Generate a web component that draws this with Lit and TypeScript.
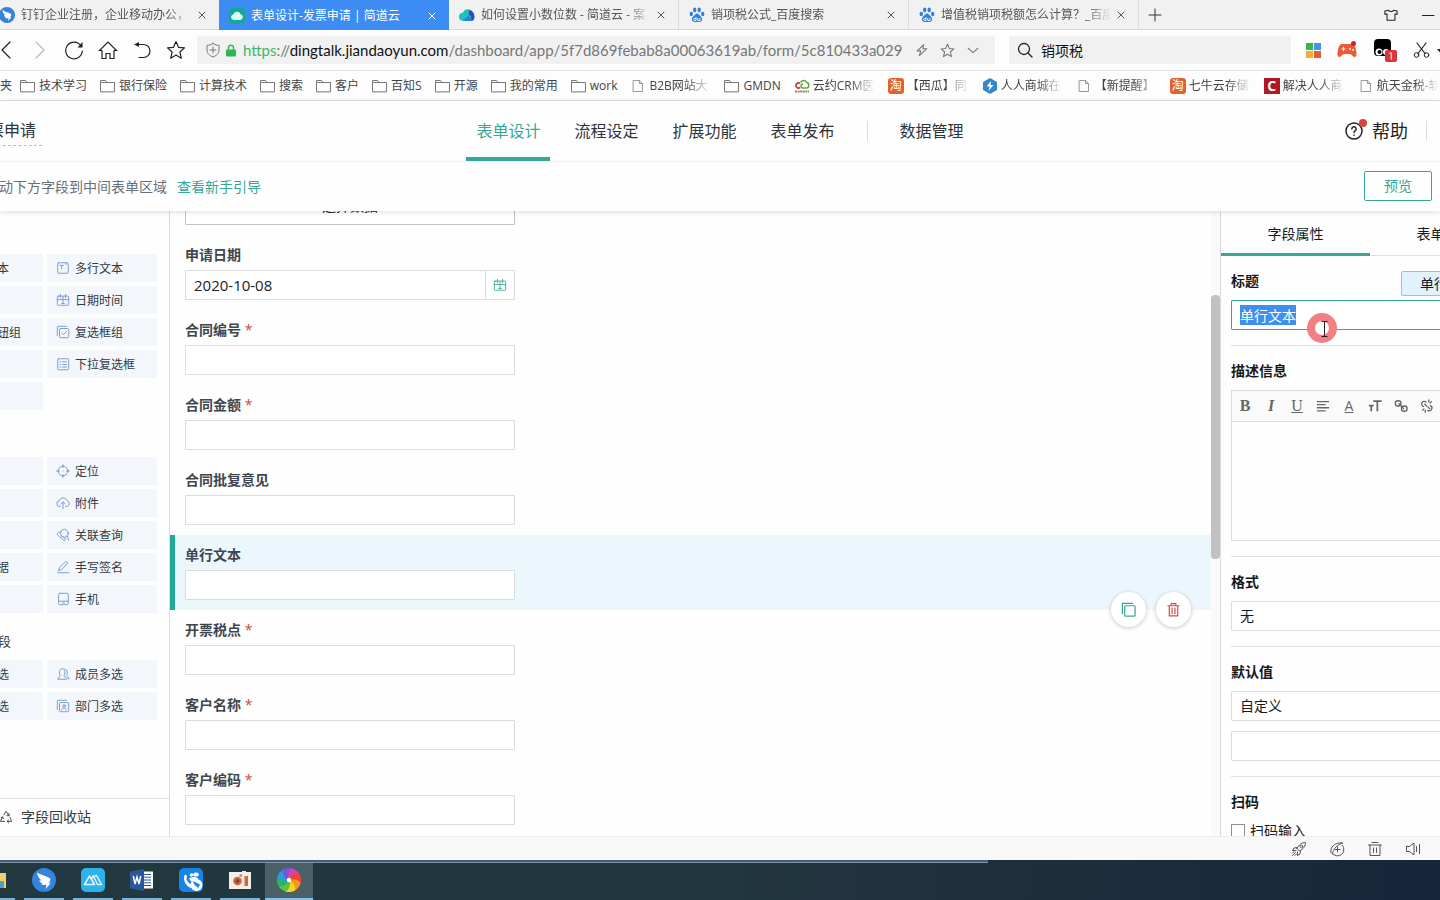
import { LitElement, html, svg, css, nothing } from "lit";
import { customElement, query } from "lit/decorators.js";
import { classMap } from "lit/directives/class-map.js";

const stroke = (body: unknown, size = 16, box = 16) => html`<svg
  width=${size} height=${size} viewBox="0 0 ${box} ${box}" fill="none" stroke="currentColor"
  stroke-width="1" stroke-linecap="round" stroke-linejoin="round" aria-hidden="true">${body}</svg>`;

const star = svg`<path d="M10 1.5l2.5 5.8 6 .6-4.6 4.1 1.4 6.2L10 15l-5.3 3.2L6.100 12 1.5 7.900l6-.6z"/>`;

const icons = {
  back: () => stroke(svg`<path stroke-width="1.2" d="M14 2L6 10l8 8"/>`, 20, 20),
  forward: () => stroke(svg`<path stroke="#bbb" stroke-width="1.2" d="M6 2l8 8-8 8"/>`, 20, 20),
  reload: () => stroke(svg`<path stroke-width="1.2" d="M17 6A8.300 8.300 0 1 0 18.300 11"/><path d="M18.500 2v5.500h-5z" fill="currentColor" stroke="none"/>`, 20, 20),
  home: () => stroke(svg`<path stroke-width="1.2" stroke-linejoin="miter" d="M1.500 10.500L10 2l8.500 8.500H16V18.500h-4v-5H8v5H4v-8z"/>`, 20, 20),
  undo: () => stroke(svg`<path stroke-width="1.2" d="M5 4.500h6.500a6.500 6.500 0 0 1 0 13H7"/><path d="M2 4.500l5-2.500v5z" fill="currentColor" stroke="none"/>`, 20, 20),
  star: () => stroke(svg`<g stroke-width="1.200">${star}</g>`, 20, 20),
  starSmall: () => stroke(svg`<g stroke-width="1.400">${star}</g>`, 15, 20),
  shield: () => stroke(svg`<path d="M8 1.500C6 3 4 3.300 2 3.300V8c0 3.500 2.500 5.500 6 7 3.500-1.500 6-3.500 6-7V3.300c-2 0-4-.3-6-1.800zM8 5v6M5 8h6"/>`, 16, 16),
  lock: () => html`<svg width="10" height="13" viewBox="0 0 10 13" aria-hidden="true"><path d="M2.500 6V3.800a2.500 2.500 0 0 1 5 0V6" fill="none" stroke="#3bb75c" stroke-width="1.500"/><rect x="0" y="5.500" width="10" height="7" rx="1" fill="#2fb457"/></svg>`,
  bolt: () => stroke(svg`<path stroke-width="1.200" d="M10 2L2.500 9h4l-1.500 5.500L13.500 6.500H9z"/>`, 14, 16),
  down: () => stroke(svg`<path stroke-width="1.200" d="M2.500 6L8 11l5.500-5"/>`, 14, 16),
  search: () => stroke(svg`<circle cx="7" cy="7" r="5.500" stroke-width="1.300"/><path stroke-width="1.300" d="M11 11l4 4"/>`, 16, 16),
  close: () => stroke(svg`<path d="M1 1l6 6M7 1L1 7"/>`, 8, 8),
  plus: () => stroke(svg`<path d="M7 1v12M1 7h12"/>`, 14, 14),
  shirt: () => stroke(svg`<path stroke-width="1.200" d="M5 2.500c1 2 5 2 6 0l4 1v3.500h-2.500V14h-9V7H1V3.500z"/>`, 14, 16),
  minimise: () => stroke(svg`<path d="M0 7.500h12"/>`, 14, 14),
  tiles: () => html`<svg width="15" height="15" viewBox="0 0 15 15" aria-hidden="true"><path fill="#3cb44a" d="M0 0h7v7H0z"/><path fill="#3f9ae3" d="M8 0h7v7H8z"/><path fill="#f2ae3a" d="M0 8h7v7H0z"/><path fill="#e8583a" d="M8 8h7v7H8z"/></svg>`,
  pad: () => html`<svg width="20" height="18" viewBox="0 0 20 18" aria-hidden="true"><path fill="#ec5a36" d="M5 3h10c2.500 0 3.500 3 4.300 7.500.7 4-.3 5.500-1.800 5.500-1.700 0-2.800-3-4.500-3H7c-1.700 0-2.800 3-4.500 3C1 16 0 14.500.7 10.500 1.500 6 2.500 3 5 3z"/><path d="M6.500 6v4M4.500 8h4" stroke="#fff"/><circle cx="13" cy="8" r="1" fill="#fff"/><circle cx="16" cy="9" r="1" fill="#fff"/><circle cx="16.500" cy="2.500" r="2.500" fill="#c5252f"/></svg>`,
  monkey: () => html`<svg width="24" height="24" viewBox="0 0 24 24" aria-hidden="true"><rect x="1" y="1" width="17" height="17" rx="4"/><circle cx="6" cy="14" r="3.500" fill="#fff"/><circle cx="6.500" cy="14" r="2"/><circle cx="13" cy="14" r="3" fill="#fff"/><rect x="12" y="12" width="12" height="12" rx="2" fill="#d8353c"/><path d="M16.500 15.500l1.700-.8v7" stroke="#fff" fill="none"/></svg>`,
  scissors: () => html`<svg width="27" height="16" viewBox="0 0 27 16" fill="none" stroke="currentColor" stroke-linecap="round" aria-hidden="true"><path stroke-width="1.200" d="M4 1l8 10.500M13 1L5 11.500"/><circle cx="3.500" cy="13" r="2.300"/><circle cx="13.500" cy="13" r="2.300"/><path fill="currentColor" stroke="none" d="M24 7h6l-3 3.500z"/></svg>`,
  folder: () => stroke(svg`<path stroke="#777" d="M.5 13.500v-11h5l1.500 2h7.500v9zM.5 4.500H7"/>`),
  page: () => stroke(svg`<path stroke="#999" d="M3.500 2.500h6l3 3v8h-9zM9.500 2.500v3h3"/>`),
  crm: () => html`<svg width="16" height="16" viewBox="0 0 16 16" aria-hidden="true"><path d="M6 5.500a2.500 2.500 0 1 0 0 4" fill="none" stroke="#c8352e" stroke-width="1.600"/><path d="M6.500 4.500a3.300 3.300 0 0 1 6-.2c3.200.7 2.700 5.700 0 5.700H9a2 2 0 0 1 0-4" fill="none" stroke="#5aa83c" stroke-width="1.500"/><path d="M1 13.500h14" stroke="#8a8a78" stroke-width="2" stroke-dasharray="2 .6"/></svg>`,
  hex: () => html`<svg width="16" height="16" viewBox="0 0 16 16" aria-hidden="true"><path fill="#3686c8" d="M8 0l7 4v8l-7 4-7-4V4z"/><path fill="#fff" d="M9 3L4.500 8.500h3L6.500 13l5-6h-3z"/></svg>`,
  dingtalk: (size = 16) => html`<svg width=${size} height=${size} viewBox="0 0 24 24" aria-hidden="true"><circle cx="12" cy="12" r="12" fill="#3284dc"/><path fill="#fff" d="M5 4.500c3.500 2.200 8.500 3.500 12.500 5.500 1.500 1 1 2.200.3 3.500l-1 1.800h2L13.500 21l1-4h-2c-1 .2-2.500 0-3.500-1.200l2-.3c-2-.5-3.500-1.800-3.700-3.300l2.500.3C7.500 11 5.500 8.500 5 4.500z"/></svg>`,
  cloudGreen: () => html`<svg width="16" height="16" viewBox="0 0 16 16" aria-hidden="true"><rect width="16" height="16" rx="4" fill="#15a896"/><path fill="#d9fff5" d="M4.500 12a2.800 2.800 0 0 1-.3-5.500 4 4 0 0 1 7.500-.3A3 3 0 0 1 11.500 12z"/></svg>`,
  cloudBlue: () => html`<svg width="16" height="14" viewBox="0 0 17 14" aria-hidden="true"><path fill="#20c0c0" d="M4.500 13a4 4 0 0 1-.5-8.500A5 5 0 0 1 12 2l-2 11z"/><path fill="#2b50b8" d="M11 1.500c5 1 7.500 8.500 3.500 11.500H8L13 9c-2-1-3.500-3-2-7.500z"/><path fill="#1688dd" d="M4 13l6.500-6 4 6z"/></svg>`,
  paw: () => html`<svg width="16" height="16" viewBox="0 0 16 16" aria-hidden="true"><g fill="#2f7fdf"><ellipse cx="2.300" cy="7" rx="1.700" ry="2.200"/><ellipse cx="5.700" cy="3" rx="1.700" ry="2.400"/><ellipse cx="10.200" cy="3" rx="1.700" ry="2.400"/><ellipse cx="13.700" cy="7" rx="1.700" ry="2.200"/><path d="M8 6.500c1.500 0 2 1.500 3.500 2.800 2.500 2 2 5.700-1 5.700H5.500c-3 0-3.500-3.700-1-5.700C6 8 6.500 6.500 8 6.500z"/></g><path d="M7 10v3.500H5.500a1 1 0 0 1 0-2H7M8.800 11v2.500H11V11" fill="none" stroke="#fff" stroke-width=".9"/></svg>`,
  help: () => stroke(svg`<circle cx="9" cy="9" r="8" stroke-width="1.500"/><path stroke-width="1.500" d="M6.800 7a2.200 2.200 0 1 1 3.200 2c-.8.400-1 .8-1 1.500M9 13v.2"/>`, 18, 18),
  textarea: () => stroke(svg`<rect x="2" y="2" width="12" height="12" rx="1"/><path d="M4.500 5h4M6.500 5v4M11.500 2v2"/>`, 14),
  calendar: () => stroke(svg`<rect x="1.500" y="3.500" width="13" height="10.500" rx="1"/><path d="M1.500 7.500h13M5 1.500v4M11 1.500v4M8 4v8M6.500 12h3"/>`, 14),
  checks: () => stroke(svg`<path d="M1.500 12V2.500a1 1 0 0 1 1-1H12"/><rect x="4" y="4" width="10.500" height="10.500" rx="1"/><path d="M6.500 9l2 2 4-4"/>`, 14),
  list: () => stroke(svg`<rect x="2" y="2" width="12.500" height="12.500" rx="1"/><path d="M4.500 5.500h1M7.500 5.500H12M4.500 8.500h1M7.500 8.500H12M4.500 11.500h1M7.500 11.500H12"/>`, 14),
  target: () => stroke(svg`<circle cx="8" cy="8" r="5.500"/><path d="M8 .8v3M8 12.200v3M.8 8h3M12.200 8h3M8 8v.1" stroke-width="1.200"/>`, 14),
  upload: () => stroke(svg`<path d="M5 12H4a3.300 3.300 0 0 1-.5-6.500 4.700 4.700 0 0 1 9-.2A3.400 3.400 0 0 1 12 12h-1M8 14.500V7M5.500 9.200L8 6.800l2.500 2.400"/>`, 14),
  relate: () => stroke(svg`<circle cx="9.500" cy="6" r="4.500"/><path d="M5 4.500C2 4 .5 7 2.500 8.500l6 5.500c1.500 1 3-.5 2-2L7.500 10M13 9.500l1.500 4.500"/>`, 14),
  pen: () => stroke(svg`<path d="M3 12l1-3.500L11.500 1.500l2 2L6.500 11 3 12zM2 14.500h12.500"/>`, 14),
  phone: () => stroke(svg`<rect x="3" y="1.500" width="11" height="13" rx="1.500"/><path d="M3 10.500h11M7.500 12.500h2"/>`, 14),
  people: () => stroke(svg`<path d="M2 13.500c0-2 3-2 3-3.500C3.500 8.500 3 2 7 2s3.500 6.500 2 8c0 1.500 3 1.500 3 3.500zM10 2.500c4 0 3 6 2 7.500.5 1.500 3 1.500 3 3.500h-1.500"/>`, 14),
  dept: () => stroke(svg`<path d="M1.500 12V2.500a1 1 0 0 1 1-1H12"/><rect x="4" y="4" width="10.500" height="10.500" rx="1"/><circle cx="9.200" cy="8" r="1.500"/><path d="M6.500 12.500c.3-3 5-3 5.500 0"/>`, 14),
  recycle: () => stroke(svg`<path d="M5.500 5.500L8 1.500l3 4.500M11.500 4v2.500H9M12.500 8.500l2 4.500H9.500M11 11.500L9.300 13 11 14.700M6.500 13h-5l2.500-5M2.300 8.800L4 7.800l1.200 2"/>`, 14),
  copy: () => stroke(svg`<path stroke-width="1.300" d="M1.500 12.500V1.500h11"/><rect x="4" y="4" width="11" height="11" rx="1" stroke-width="1.300"/>`, 15),
  trash: () => stroke(svg`<path stroke-width="1.300" d="M2 4h12M5.500 4V1.800h5V4M3.500 4v10.700h9V4M6.500 6.500v6M9.500 6.500v6"/>`, 15),
  alignLeft: () => stroke(svg`<path stroke-width="1.500" stroke-linecap="butt" d="M1 3h14M1 6.500h10M1 10h14M1 13.500h10"/>`, 14),
  link: () => stroke(svg`<rect x="1.500" y="2" width="6.500" height="6" rx="3" stroke-width="1.500"/><rect x="8.500" y="8" width="6.500" height="6" rx="3" stroke-width="1.500"/><path stroke-width="1.500" d="M5.500 5.500l5.500 5.500"/>`, 14),
  unlink: () => stroke(svg`<path stroke-width="1.500" d="M7 3.500a3 3 0 1 0-3 5M9 13a3 3 0 1 0 3-5.500M5.500 6l2 2M9 9l2 2M10 1v2M13 3l-1.500 1.500M3 13l1.500-1.500M6 15v-2"/>`, 14),
  textSize: () => stroke(svg`<path stroke-width="2" stroke-linecap="butt" d="M6 2.500h9.500M10.700 2.500V14M1 7.500h5.500M3.700 7.500V14"/>`, 14),
  rocket: () => stroke(svg`<path d="M6 7.500C8 3.500 11 1.500 14.500 1.500c0 3.500-2 6.500-6 8.500L6 7.500zM6.500 6.500L3 7l-1.500 2.500H5M9.500 9.500L9 13l-2.500 1.500V11M4.500 11.500l-3 3M3 10.500L1.500 12M5.500 13L4 14.500"/><circle cx="10.500" cy="5.500" r="1.300"/>`),
  boost: () => stroke(svg`<path d="M13.500 4.500a6 6 0 1 1-10 8M2 12C.5 6 6 1 14 2 8 3.500 4 8 3.500 13M8.500 6v5M6 8.500h5"/>`),
  bin: () => stroke(svg`<path d="M1.500 4h13M5 1.500h6M3 4v10.500h10V4M6.500 7v4.500M9.500 7v4.500"/>`),
  sound: () => stroke(svg`<path d="M1.500 5.500v5h3L9 14V2L4.500 5.500zM11.500 5.500v5M14.500 3.500v9"/>`),
  explorer: () => html`<svg width="24" height="24" viewBox="0 0 24 24" aria-hidden="true"><path fill="#f3cf6b" d="M0 3h9l2 2h12v15H0z"/><path fill="#4aa0c8" d="M5 13h16v7h-4v-3H9v3H5z"/></svg>`,
  mind: () => html`<svg width="24" height="24" viewBox="0 0 24 24" aria-hidden="true"><rect width="24" height="24" rx="5" fill="#2cb3ec"/><path d="M3.500 16.500L8.500 8l5 8.500zM10.500 11L12 8l2 .500M14 8l1.500-.5L20.500 16.500h-4L12.500 8.500" fill="none" stroke="#dff6ff" stroke-width="1.500" stroke-linejoin="round"/></svg>`,
  word: () => html`<svg width="24" height="24" viewBox="0 0 24 24" aria-hidden="true"><path fill="#fff" d="M12 3.500h11v17H12z"/><path d="M14 6.500h7M14 9.200h7M14 12h7M14 14.800h7M14 17.500h7" stroke="#2b579a"/><path fill="#2b579a" d="M0 3.500L14 1v22L0 20.500z"/><path d="M3.300 8l1.700 8 2-7 2 7 1.700-8" fill="none" stroke="#fff" stroke-width="1.500"/></svg>`,
  call: () => html`<svg width="24" height="24" viewBox="0 0 24 24" aria-hidden="true"><rect width="24" height="24" rx="5" fill="#1585e8"/><path fill="#fff" d="M6 6.500l2 1.200-.5 3.300c.8 2.500 2.500 4.500 5 5.500l1.500-1 2.500 2-2.500 3C9 20 4.500 15 5 9z"/><circle cx="17.500" cy="17" r="6" fill="#fff"/><circle cx="12.500" cy="7" r="1.800" fill="#fff"/><ellipse cx="17" cy="6.500" rx="2.800" ry="2" fill="#fff"/><path fill="#fff" d="M10 10.500c3-2 7-2 9 0v3h-7z"/><path fill="#1585e8" d="M14 13l7 3.500-1 2-1.500 2.500v-2c-2-.5-4-3-4.500-6z"/></svg>`,
  recorder: () => html`<svg width="22" height="20" viewBox="0 0 22 20" aria-hidden="true"><path fill="#f4eee9" d="M0 2h13V1h4v1h5v17H0z"/><circle cx="8.500" cy="11" r="4.300" fill="#cf6842"/><circle cx="8.500" cy="11" r="2" fill="#8a4128"/><path fill="#cf6842" d="M15.500 6H19v10h-3.500zM10.500 4.500h2.500v2h-2.500z"/></svg>`,
  wheel: () => html`<svg width="24" height="24" viewBox="0 0 24 24" aria-hidden="true">${["#f0442e", "#f7941e", "#f5d327", "#62c33a", "#24b46a", "#2a9be0", "#7a55d9", "#e0429a"].map((c, i) => svg`<path fill=${c} transform="rotate(${i * 45 + 60} 12 12)" d="M12 12C9 8 9 3 12 0a12 12 0 0 1 9.500 4.500C17 4 13 7 12 12z"/>`)}<circle cx="12" cy="12" r="2.200" fill="#fff"/></svg>`,
};

type IconName = keyof typeof icons;
const icon = (name: IconName) => (icons[name] as () => unknown)();

const base = css`
  :host { font-family: "Open Sans", "Noto Sans CJK SC", sans-serif; }
  * { box-sizing: border-box; }
  svg { display: block; flex: none; }
  button, input, select, textarea { font: inherit; color: inherit; margin: 0; }
  button { background: none; border: 0; padding: 0; }
  a { color: inherit; text-decoration: none; }
`;

const tabs: { icon: IconName; title: string; active?: boolean }[] = [
  { icon: "dingtalk", title: "钉钉企业注册，企业移动办公，" },
  { icon: "cloudGreen", title: "表单设计-发票申请 | 简道云", active: true },
  { icon: "cloudBlue", title: "如何设置小数位数 - 简道云 - 案" },
  { icon: "paw", title: "销项税公式_百度搜索" },
  { icon: "paw", title: "增值税销项税额怎么计算？_百度" },
];

const bookmarks: { icon: IconName | "tao" | "c"; title: string; clip?: boolean }[] = [
  ...["技术学习", "银行保险", "计算技术", "搜索", "客户", "百知S", "开源", "我的常用", "work"].map((title) => ({ icon: "folder" as const, title })),
  { icon: "page", title: "B2B网站大", clip: true },
  { icon: "folder", title: "GMDN" },
  { icon: "crm", title: "云约CRM医", clip: true },
  { icon: "tao", title: "【西瓜】同", clip: true },
  { icon: "hex", title: "人人商城在", clip: true },
  { icon: "page", title: "【新提醒】", clip: true },
  { icon: "tao", title: "七牛云存储", clip: true },
  { icon: "c", title: "解决人人商", clip: true },
  { icon: "page", title: "航天金税-软", clip: true },
];

@customElement("browser-chrome")
class BrowserChrome extends LitElement {
  static styles = [base, css`
    :host { display: block; flex: none; overflow: hidden; color: #333; background: #fdfdfd; }
    .tabs { display: flex; height: 30px; background: #f1f1f2; border-bottom: 1px solid #d9d9db; font-size: 12px; }
    .tab { display: flex; align-items: center; gap: 6px; width: 230px; flex: none; padding: 1px 13px 0 10px; border-right: 1px solid #dcdcde; color: #555; }
    .tab:first-child { margin-left: -11px; border-right: 0; }
    .tab.active { background: #3c8cf4; color: #fff; border-right: 0; height: 30px; }
    .title { flex: 1; overflow: hidden; white-space: nowrap; line-height: 20px; mask-image: linear-gradient(90deg, #000 85%, transparent); }
    .active .title { mask-image: none; }
    .new { padding: 0 9px; }
    .window { margin-left: auto; display: flex; align-items: center; gap: 24px; color: #222; }
    .window button:last-child { width: 18px; overflow: hidden; }
    .tools { display: flex; align-items: center; height: 40px; color: #222; }
    .nav { display: flex; gap: 14px; margin: 0 11px 0 -4px; }
    .address { display: flex; align-items: center; gap: 5px; flex: 1; min-width: 0; height: 28px; padding: 0 15px 0 8px; background: #f1f1f2; color: #777; }
    .url { flex: 1; overflow: hidden; white-space: nowrap; font-family: Lato, "Noto Sans CJK SC", sans-serif; font-size: 15px; line-height: 24px; margin-left: 2px; color: #777; }
    .scheme { color: #3db868; }
    .domain { color: #111; }
    .address button + button { margin-left: 6px; }
    .search { display: flex; align-items: center; gap: 8px; width: 282px; height: 28px; padding: 0 8px; margin: 0 15px 0 14px; background: #f1f1f2; }
    .search input { border: 0; outline: 0; padding: 0; background: none; font-size: 14px; min-width: 0; color: #111; }
    .addons { display: flex; align-items: center; gap: 16px; }
    .bookmarks { display: flex; align-items: center; gap: 12px; height: 31px; border-top: 1px solid #e2e2e4; border-bottom: 1px solid #e2e2e4; font-size: 12px; line-height: 20px; color: #444; white-space: nowrap; }
    .cut { margin-right: -4px; }
    .bookmark { display: flex; align-items: center; gap: 3px; flex: none; }
    .bookmark + .bookmark { margin-left: 1px; }
    .clip { width: 62px; overflow: hidden; mask-image: linear-gradient(90deg, #000 60%, transparent); }
    .badge { display: grid; place-items: center; width: 16px; height: 16px; border-radius: 3px; background: #e0622f; color: #fff; font-size: 12px; line-height: 16px; }
    .badge.c { background: #b01923; border-radius: 0; font-weight: 700; font-size: 14px; }
  `];

  render() {
    return html`
      <nav class="tabs" aria-label="标签页">
        ${tabs.map((t) => html`<div class=${classMap({ tab: true, active: !!t.active })}>
          ${icon(t.icon)}<span class="title">${t.title}</span><button aria-label="关闭">${icon("close")}</button>
        </div>`)}
        <button class="new" aria-label="新标签页">${icon("plus")}</button>
        <div class="window"><button aria-label="皮肤">${icon("shirt")}</button><button aria-label="最小化">${icon("minimise")}</button></div>
      </nav>
      <div class="tools">
        <div class="nav">
          ${([["back", "后退"], ["forward", "前进"], ["reload", "刷新"], ["home", "主页"], ["undo", "恢复"], ["star", "收藏"]] as [IconName, string][]).map(([n, l]) => html`<button aria-label=${l}>${icon(n)}</button>`)}
        </div>
        <div class="address">
          ${icon("shield")}${icon("lock")}
          <span class="url"><span class="scheme">https</span>://<span class="domain">dingtalk.jiandaoyun.com</span>/dashboard/app/5f7d869febab8a00063619ab/form/5c810433a029</span>
          <button aria-label="极速">${icon("bolt")}</button><button aria-label="收藏">${icon("starSmall")}</button><button aria-label="更多">${icon("down")}</button>
        </div>
        <label class="search">${icon("search")}<input aria-label="搜索" .value=${"销项税"} /></label>
        <div class="addons">
          ${([["tiles", "应用"], ["pad", "游戏"], ["monkey", "脚本"], ["scissors", "截图"]] as [IconName, string][]).map(([n, l]) => html`<button aria-label=${l}>${icon(n)}</button>`)}
        </div>
      </div>
      <nav class="bookmarks" aria-label="收藏夹">
        <span class="cut">夹</span>
        ${bookmarks.map((b) => html`<a class="bookmark" href="#">
          ${b.icon === "tao" ? html`<span class="badge">淘</span>` : b.icon === "c" ? html`<span class="badge c">C</span>` : icon(b.icon)}
          <span class=${b.clip ? "clip" : ""}>${b.title}</span></a>`)}
      </nav>`;
  }
}

@customElement("app-header")
class AppHeader extends LitElement {
  static styles = [base, css`
    :host { display: block; flex: none; position: relative; z-index: 2; background: #fefefe; box-shadow: 0 1px 5px rgba(60, 60, 90, .18); color: #2e343b; }
    .top { display: grid; grid-template-columns: 1fr auto 1fr; height: 61px; border-bottom: 1px solid #f1f1f3; font-size: 16px; }
    .name { justify-self: start; align-self: center; margin-left: -28px; padding: 0 6px 2px 0; line-height: 26px; border-bottom: 1px dashed #bbb; white-space: nowrap; }
    .nav { display: flex; align-items: stretch; gap: 14px; }
    .nav a { padding: 17px 10px 0; line-height: 26px; border-bottom: 4px solid transparent; }
    .nav a.active { color: #35a797; border-color: #35a797; }
    .rule { align-self: center; width: 1px; height: 20px; background: #ddd; }
    .nav .rule { margin: 0 8px; }
    .help { justify-self: end; display: flex; align-items: center; font-size: 18px; line-height: 26px; color: #222; }
    .help a { display: flex; align-items: center; gap: 9px; margin-right: 18px; }
    .mark { position: relative; }
    .dot { position: absolute; top: -3px; right: -4px; width: 8px; height: 8px; border-radius: 50%; background: #d5453f; }
    .help .rule { margin-right: 13px; }
    .sub { display: flex; align-items: center; height: 49px; padding-right: 8px; font-size: 14px; line-height: 20px; }
    .hint { margin: 0 10px 0 -57px; color: #66707b; white-space: nowrap; }
    .guide { color: #35a797; }
    .preview { margin: 0 0 1px auto; width: 68px; height: 30px; border: 1px solid #35a797; border-radius: 2px; color: #35a797; line-height: 26px; }
  `];

  render() {
    return html`
      <div class="top">
        <span class="name">发票申请</span>
        <nav class="nav">
          <a class="active" href="#">表单设计</a><a href="#">流程设定</a><a href="#">扩展功能</a><a href="#">表单发布</a>
          <span class="rule"></span><a href="#">数据管理</a>
        </nav>
        <div class="help"><a href="#"><span class="mark">${icon("help")}<span class="dot"></span></span>帮助</a><span class="rule"></span></div>
      </div>
      <div class="sub">
        <span class="hint">点击或拖动下方字段到中间表单区域</span><a class="guide" href="#">查看新手引导</a>
        <button class="preview">预览</button>
      </div>`;
  }
}

const palette: { title: string; items: [string, string, IconName?][] }[] = [
  { title: "基础字段", items: [["单行文本", "多行文本", "textarea"], ["数字", "日期时间", "calendar"], ["单选按钮组", "复选框组", "checks"], ["下拉框", "下拉复选框", "list"], ["分割线", ""]] },
  { title: "增强字段", items: [["地址", "定位", "target"], ["图片", "附件", "upload"], ["子表单", "关联查询", "relate"], ["关联数据", "手写签名", "pen"], ["流水号", "手机", "phone"]] },
  { title: "部门成员字段", items: [["成员单选", "成员多选", "people"], ["部门单选", "部门多选", "dept"]] },
];

@customElement("field-palette")
class FieldPalette extends LitElement {
  static styles = [base, css`
    :host { display: flex; flex-direction: column; flex: none; width: 170px; border-right: 1px solid #d8dadd; background: #fefefe; color: #333a42; overflow: hidden; }
    .list { flex: 1; min-height: 0; display: flex; flex-direction: column; align-items: flex-end; gap: 4px; padding-right: 12px; overflow: hidden; }
    h3 { margin: 14px 0 9px; font-size: 13px; font-weight: 400; line-height: 20px; }
    .grid { display: grid; grid-template-columns: 110px 110px; gap: 4px; }
    .item { display: flex; align-items: center; gap: 5px; height: 28px; padding: 2px 0 0 9px; background: #f3f6fb; font-size: 12px; line-height: 20px; white-space: nowrap; }
    .item svg { color: #6f95c8; margin-bottom: 2px; }
    .recycle { display: flex; align-items: center; gap: 8px; height: 38px; padding-bottom: 1px; border-top: 1px solid #dcdee0; margin-left: -1px; font-size: 14px; line-height: 20px; }
  `];

  render() {
    const item = (label: string, name: IconName = "textarea") => (label ? html`<button class="item">${icon(name)}${label}</button>` : nothing);
    return html`
      <div class="list">
        ${palette.map((s) => html`<section><h3>${s.title}</h3><div class="grid">
          ${s.items.map(([a, b, n]) => html`${item(a)}${item(b, n)}`)}
        </div></section>`)}
      </div>
      <button class="recycle">${icon("recycle")}字段回收站</button>`;
  }
}

const fields: { label: string; kind?: "pick" | "date"; value?: string; required?: boolean; selected?: boolean }[] = [
  { label: "选择数据", kind: "pick" },
  { label: "申请日期", kind: "date", value: "2020-10-08" },
  { label: "合同编号", required: true },
  { label: "合同金额", required: true },
  { label: "合同批复意见" },
  { label: "单行文本", selected: true },
  { label: "开票税点", required: true },
  { label: "客户名称", required: true },
  { label: "客户编码", required: true },
];

@customElement("form-canvas")
class FormCanvas extends LitElement {
  static styles = [base, css`
    :host { display: flex; flex: 1; min-width: 0; overflow: hidden; background: #fefefe; color: #40464e; }
    .fields { flex: 1; min-width: 0; margin-top: -26px; }
    .field { position: relative; display: flex; flex-direction: column; padding: 10px; border-left: 5px solid transparent; }
    .field.selected { background: #ebf7fc; border-color: #20a898; }
    label { font-size: 14px; font-weight: 600; line-height: 20px; margin-bottom: 5px; }
    .required { color: #d0453e; font-weight: 400; }
    .control { display: flex; width: 330px; max-width: 100%; height: 30px; border: 1px solid #d9dbde; border-radius: 1px; background: #fff; color: #222; }
    .control input { flex: 1; min-width: 0; border: 0; outline: 0; padding: 0 8px; background: none; font-size: 15px; }
    .pick { align-items: flex-start; justify-content: center; border-color: #bfc2c6; font-size: 14px; line-height: 20px; }
    .date { display: grid; place-items: center; width: 29px; border-left: 1px solid #d9dbde; color: #35a797; }
    .actions { position: absolute; right: 20px; bottom: -17px; z-index: 1; display: flex; gap: 10px; }
    .round { display: grid; place-items: center; width: 35px; height: 35px; border-radius: 50%; background: #fff; box-shadow: 0 1px 4px rgba(0, 0, 0, .22); color: #35a797; }
    .delete { color: #d0504a; }
    .track { flex: none; width: 9px; background: #fafafb; }
    .thumb { height: 264px; margin-top: 84px; border-radius: 4px; background: #c1c1c3; }
  `];

  render() {
    return html`
      <div class="fields">
        ${fields.map((f, i) => html`<div class=${classMap({ field: true, selected: !!f.selected })}>
          ${f.kind === "pick"
            ? html`<button class="control pick">${f.label}</button>`
            : html`<label for="f${i}">${f.label} ${f.required ? html`<span class="required">*</span>` : nothing}</label>
              <div class="control"><input id="f${i}" .value=${f.value ?? ""} />
                ${f.kind === "date" ? html`<button class="date" aria-label="选择日期">${icon("calendar")}</button>` : nothing}</div>`}
          ${f.selected ? html`<div class="actions"><button class="round" aria-label="复制">${icon("copy")}</button><button class="round delete" aria-label="删除">${icon("trash")}</button></div>` : nothing}
        </div>`)}
      </div>
      <div class="track"><div class="thumb"></div></div>`;
  }
}

@customElement("property-panel")
class PropertyPanel extends LitElement {
  static styles = [base, css`
    :host { display: block; flex: none; width: 220px; border-left: 1px solid #d8dadd; background: #fefefe; color: #16191c; overflow: clip; font-size: 14px; line-height: 20px; position: relative; }
    .inner { width: 298px; }
    .tabs { display: grid; grid-template-columns: 1fr 1fr; height: 45px; }
    .tabs button { padding-top: 2px; border-bottom: 1px solid #dcdee0; }
    .tabs .active { border-bottom: 3px solid #35a797; padding-top: 4px; }
    section { margin-left: 10px; padding: 15px 10px 15px 0; border-top: 1px solid #dcdee0; position: relative; }
    section:first-of-type { border-top: 0; }
    .label { display: block; font-weight: 600; margin-bottom: 9px; }
    .type { position: absolute; right: 10px; top: 15px; width: 108px; height: 25px; padding-left: 18px; text-align: left; background: #e2f2fd; border: 1px solid #9cc0d4; border-radius: 2px; }
    .box { display: block; width: 100%; height: 30px; padding: 0 8px; border: 1px solid #d9dbde; border-radius: 1px; background: #fff; outline: 0; appearance: none; }
    .box + .box { margin-top: 10px; }
    .box.focus { border-color: #35a797; }
    .box::selection { background: #3d8ff0; color: #fff; }
    .editor { border: 1px solid #d9dbde; }
    .format { display: flex; align-items: center; height: 31px; background: #fafafb; border-bottom: 1px solid #dcdee0; color: #666; }
    .format button { display: grid; place-items: center; width: 26px; height: 30px; }
    .serif { font-family: "Liberation Serif", serif; font-size: 16px; }
    .bold { font-weight: 700; }
    .italic { font-style: italic; font-weight: 700; }
    .under { text-decoration: underline; }
    .editor textarea { display: block; width: 100%; height: 118px; border: 0; outline: 0; resize: none; background: none; }
    .check { display: flex; align-items: center; gap: 5px; }
    .check input { appearance: none; width: 14px; height: 14px; border: 1px solid #8c8f93; background: #fff; }
    .pointer { position: absolute; left: 86px; top: 102px; }
  `];

  @query("#title") titleBox!: HTMLInputElement;

  firstUpdated() {
    this.titleBox.focus({ preventScroll: true });
    this.titleBox.select();
  }

  render() {
    return html`<div class="inner">
      <div class="tabs"><button class="active">字段属性</button><button>表单属性</button></div>
      <section>
        <label class="label" for="title">标题</label><button class="type">单行文本</button>
        <input class="box focus" id="title" .value=${"单行文本"} />
      </section>
      <section>
        <label class="label" for="desc">描述信息</label>
        <div class="editor">
          <div class="format">
            <button class="serif bold" aria-label="加粗">B</button>
            <button class="serif italic" aria-label="斜体">I</button>
            <button class="serif under" aria-label="下划线">U</button>
            <button aria-label="对齐">${icon("alignLeft")}</button>
            <button class="under" aria-label="颜色">A</button>
            <button aria-label="字号">${icon("textSize")}</button>
            <button aria-label="链接">${icon("link")}</button>
            <button aria-label="取消链接">${icon("unlink")}</button>
          </div>
          <textarea id="desc"></textarea>
        </div>
      </section>
      <section><label class="label" for="format">格式</label><select class="box" id="format"><option>无</option></select></section>
      <section>
        <label class="label" for="default">默认值</label>
        <select class="box" id="default"><option>自定义</option></select><input class="box" aria-label="默认值内容" />
      </section>
      <section><span class="label">扫码</span><label class="check"><input type="checkbox" />扫码输入</label></section>
    </div>
    <svg class="pointer" width="30" height="30" viewBox="0 0 30 30" aria-hidden="true">
      <circle cx="15" cy="15" r="11" fill="#fff" stroke="#f27f83" stroke-width="8"/>
      <path d="M14.500 8.500h6M14.500 23.500h6M17.500 8.500v15" stroke="#222" fill="none"/>
    </svg>`;
  }
}

@customElement("task-bar")
class TaskBar extends LitElement {
  static styles = [base, css`
    :host { display: block; flex: none; }
    .status { display: flex; justify-content: flex-end; align-items: center; gap: 22px; height: 24px; padding-right: 19px; background: #f8f8f9; border-top: 1px solid #ececee; color: #555; }
    .tasks { display: flex; gap: 1px; height: 40px; padding-top: 2px; background: linear-gradient(90deg, #223940 0%, #22363f 50%, #17253a 100%); position: relative; overflow: hidden; }
    .edge { position: absolute; top: 0; left: 0; width: 988px; max-width: 100%; height: 3px; background: #435b8b; border-bottom: 1px solid #83959d; }
    .task { display: grid; place-items: center; flex: none; width: 48px; padding-bottom: 2px; background: linear-gradient(#78b3da, #78b3da) center bottom / 40px 2px no-repeat; }
    .task:first-of-type { margin-left: -29px; }
    .task.active { background: linear-gradient(#83c2ea, #83c2ea) center bottom / 48px 2px no-repeat, #4b6067; }
  `];

  render() {
    return html`
      <div class="status">
        ${([["rocket", "加速"], ["boost", "优化"], ["bin", "清理"], ["sound", "声音"]] as [IconName, string][]).map(([n, l]) => html`<button aria-label=${l}>${icon(n)}</button>`)}
      </div>
      <div class="tasks">
        <div class="edge"></div>
        <button class="task" aria-label="资源管理器">${icon("explorer")}</button>
        <button class="task" aria-label="钉钉">${icons.dingtalk(24)}</button>
        <button class="task" aria-label="导图">${icon("mind")}</button>
        <button class="task" aria-label="文档">${icon("word")}</button>
        <button class="task" aria-label="通话">${icon("call")}</button>
        <button class="task" aria-label="录屏">${icon("recorder")}</button>
        <button class="task active" aria-label="浏览器">${icon("wheel")}</button>
      </div>`;
  }
}

@customElement("app-root")
class AppRoot extends LitElement {
  static styles = [base, css`
    :host { display: flex; flex-direction: column; height: 100vh; overflow: hidden; background: #fefefe; }
    .body { display: flex; flex: 1; min-height: 0; overflow: hidden; }
  `];

  render() {
    return html`
      <browser-chrome></browser-chrome>
      <app-header></app-header>
      <main class="body"><field-palette></field-palette><form-canvas></form-canvas><property-panel></property-panel></main>
      <task-bar></task-bar>`;
  }
}
